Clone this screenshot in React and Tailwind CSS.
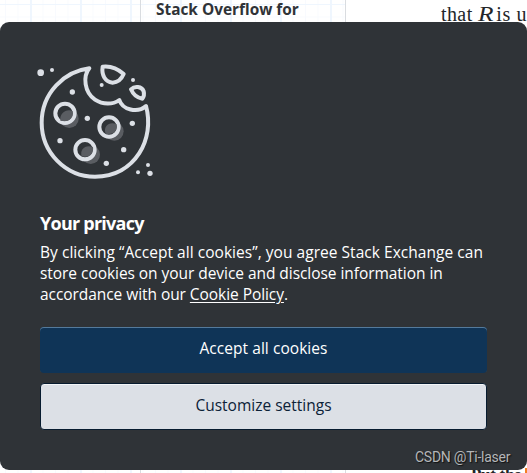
function CookieArt() {
  return (
    <svg className="-ml-[10px] block h-[135px] w-[135px]" viewBox="0 0 405 405" fill="none">
      <g fill="#5a5d62">
        <circle cx="118" cy="191" r="28" />
        <circle cx="253" cy="229" r="28" />
        <circle cx="182" cy="299" r="28" />
      </g>
      <g stroke="#dce0e6" strokeWidth="12" strokeLinejoin="round" strokeLinecap="round">
        <path d="M178 40C158 64 163 112 195 134C219 150 249 149 268 135C277 164 322 176 348 153C375 250 317 365 195 365C107 365 35 292 35 203C35 113 104 49 178 40Z" />
        <circle cx="105" cy="175" r="29" fill="#2f3337" />
        <circle cx="237" cy="216" r="29" fill="#2f3337" />
        <circle cx="165" cy="284" r="29" fill="#2f3337" />
        <path d="M218 35C242 32 264 42 281 57C275 71 266 82 248 83C225 80 214 60 218 35Z" />
        <path d="M303 103C314 92 335 94 341 109C343 117 342 125 337 131C321 129 309 117 303 103Z" />
      </g>
      <g fill="#5a5d62">
        <path d="M91 197C88 176 108 160 128 168C132 188 119 201 96 198Z" />
        <path d="M227 236C218 214 239 198 260 208C264 229 249 241 227 236Z" />
        <path d="M155 304C148 283 167 267 189 276C192 296 178 310 155 304Z" />
      </g>
      <g fill="#dce0e6">
        <circle cx="32" cy="53" r="10" />
        <circle cx="66" cy="45" r="6" />
        <circle cx="127" cy="111" r="8" />
        <circle cx="172" cy="190" r="8" />
        <circle cx="90" cy="257" r="8" />
        <circle cx="307" cy="205" r="8" />
        <circle cx="281" cy="284" r="8" />
        <circle cx="229" cy="325" r="8" />
        <circle cx="215" cy="90" r="6" />
        <circle cx="309" cy="75" r="6" />
        <circle cx="354" cy="330" r="6" />
        <circle cx="324" cy="352" r="6" />
        <circle cx="360" cy="355" r="8" />
      </g>
    </svg>
  );
}

function PageBehind() {
  return (
    <div className="flex h-full bg-white">
      <div className="h-full w-[346px] border-r border-[#d9dce0] bg-[linear-gradient(to_right,#eff6fe_2px,transparent_2px),linear-gradient(to_bottom,#eff6fe_1px,transparent_1px),linear-gradient(to_right,#f8fafe_1px,transparent_1px),linear-gradient(to_bottom,#f8fafe_1px,transparent_1px)] bg-[position:30px_0,0_4px,5px_0,0_4px] bg-[size:50px_50px,50px_50px,12.5px_12.5px,12.5px_12.5px]">
        <div className="ml-[140px] h-full border-l border-[#d9dce0] pl-[15px]">
          <div className="whitespace-nowrap font-['Open_Sans',sans-serif] text-[15.4px] leading-[20px] font-bold text-[#2f3337]">
            Stack Overflow for
          </div>
        </div>
      </div>
      <div className="flex h-full flex-1 flex-col justify-between overflow-hidden whitespace-nowrap font-['Liberation_Serif',serif] text-[#232629]">
        <div className="flex pt-[1px] pl-[95px] text-[20px] leading-[26px]">
          <span className="w-[39px] tracking-[0.4px]">that</span>
          <i className="w-[20px] origin-left scale-x-115 text-[22px]">R</i>
          <span className="tracking-[0.6px]">is u</span>
        </div>
        <div className="flex h-[5px] overflow-hidden pl-[125px] text-[17px] leading-[14px] font-bold">
          <span className="w-[55px] tracking-[-0.3px]">Put the</span>
          <span className="h-[7px] w-[2px] bg-[#f48024]" />
        </div>
      </div>
    </div>
  );
}

export default function App() {
  return (
    <div className="relative h-[473px] w-[527px] overflow-hidden">
      <PageBehind />
      <section className="absolute inset-x-0 top-[22px] flex h-[448px] flex-col rounded-[9px] bg-[#2f3337] px-10 pt-[33px] font-['Open_Sans','Noto_Sans',sans-serif] text-white">
        <CookieArt />
        <h2 className="mt-[21px] whitespace-nowrap text-[18px] leading-[24px] font-bold tracking-[-0.75px]">
          Your privacy
        </h2>
        <p className="mt-[7px] whitespace-nowrap text-[15.5px] leading-[21px]">
          <span className="tracking-[0.04px]">By clicking “Accept all cookies”, you agree Stack Exchange can</span>
          <br />
          <span className="tracking-[-0.05px]">store cookies on your device and disclose information in</span>
          <br />
          <span className="tracking-[-0.06px]">
            accordance with our <a className="underline underline-offset-2">Cookie Policy</a>.
          </span>
        </p>
        <button className="mt-[22px] h-[46px] w-[447px] shrink-0 rounded-[4px] bg-[#0f3457] pb-[2px] text-[15.5px] tracking-[0.05px] shadow-[inset_0_1px_0_0_#547a9b]">
          Accept all cookies
        </button>
        <button className="mt-[10px] h-[47px] w-[447px] shrink-0 rounded-[4px] border border-[#071b2f] bg-[#dce0e6] pb-[2px] text-[15.5px] text-[#0c2238] shadow-[inset_0_1px_0_0_#f3f5f7]">
          Customize settings
        </button>
      </section>
      <span className="absolute top-[448px] left-[415px] whitespace-nowrap font-[Roboto,sans-serif] text-[14px] leading-[18px] tracking-[-0.25px] text-[#b4b6b8] [text-shadow:1px_1px_1px_#111]">
        CSDN @Ti-laser
      </span>
    </div>
  );
}
